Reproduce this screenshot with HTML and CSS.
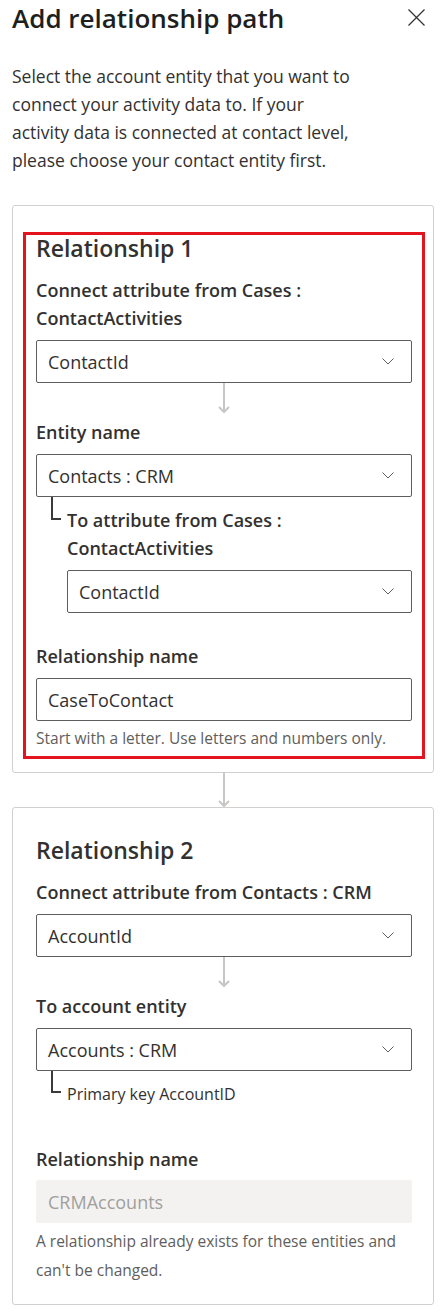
FILE: index.html
```html
<!DOCTYPE html>
<html lang="en">
<head>
<meta charset="utf-8">
<title>Add relationship path</title>
<link rel="stylesheet" href="styles.css">
</head>
<body>
<div class="panel">
  <header class="panel-header">
    <h1 class="panel-title">Add relationship path</h1>
    <button class="close-btn" aria-label="Close">
      <svg width="17" height="17" viewBox="0 0 17 17"><path d="M0.5 0.5 L16.5 16.5 M16.5 0.5 L0.5 16.5" stroke="#323130" stroke-width="1.2" fill="none"/></svg>
    </button>
  </header>
  <p class="intro">Select the account entity that you want to connect your activity data to. If your activity data is connected at contact level, please choose your contact entity first.</p>

  <section class="card">
    <div class="highlight"></div>
    <h2 class="card-title">Relationship 1</h2>
    <div class="field-label">Connect attribute from Cases : ContactActivities</div>
    <div class="dropdown"><span>ContactId</span><svg class="chev" width="12" height="7" viewBox="0 0 12 7"><path d="M0.5 0.5 L6 6 L11.5 0.5" stroke="#605e5c" stroke-width="1" fill="none"/></svg></div>
    <div class="flow-arrow"><svg width="12" height="30" viewBox="0 0 12 30"><path d="M6 0 V28.5 M1 24 L6 29 L11 24" stroke="#c8c6c4" stroke-width="2" fill="none"/></svg></div>
    <div class="field-label">Entity name</div>
    <div class="dropdown"><span>Contacts : CRM</span><svg class="chev" width="12" height="7" viewBox="0 0 12 7"><path d="M0.5 0.5 L6 6 L11.5 0.5" stroke="#605e5c" stroke-width="1" fill="none"/></svg></div>
    <div class="branch">
      <div class="branch-line"></div>
      <div class="branch-body">
        <div class="field-label">To attribute from Cases : ContactActivities</div>
        <div class="dropdown"><span>ContactId</span><svg class="chev" width="12" height="7" viewBox="0 0 12 7"><path d="M0.5 0.5 L6 6 L11.5 0.5" stroke="#605e5c" stroke-width="1" fill="none"/></svg></div>
      </div>
    </div>
    <div class="field-label name-label">Relationship name</div>
    <div class="textbox">CaseToContact</div>
    <p class="hint">Start with a letter. Use letters and numbers only.</p>
  </section>

  <div class="card-arrow"><svg width="12" height="34" viewBox="0 0 12 34"><path d="M6 0 V32.5 M1 28 L6 33 L11 28" stroke="#c8c6c4" stroke-width="2" fill="none"/></svg></div>

  <section class="card">
    <h2 class="card-title">Relationship 2</h2>
    <div class="field-label">Connect attribute from Contacts : CRM</div>
    <div class="dropdown"><span>AccountId</span><svg class="chev" width="12" height="7" viewBox="0 0 12 7"><path d="M0.5 0.5 L6 6 L11.5 0.5" stroke="#605e5c" stroke-width="1" fill="none"/></svg></div>
    <div class="flow-arrow"><svg width="12" height="30" viewBox="0 0 12 30"><path d="M6 0 V28.5 M1 24 L6 29 L11 24" stroke="#c8c6c4" stroke-width="2" fill="none"/></svg></div>
    <div class="field-label">To account entity</div>
    <div class="dropdown"><span>Accounts : CRM</span><svg class="chev" width="12" height="7" viewBox="0 0 12 7"><path d="M0.5 0.5 L6 6 L11.5 0.5" stroke="#605e5c" stroke-width="1" fill="none"/></svg></div>
    <div class="branch">
      <div class="branch-line short"></div>
      <div class="branch-body">
        <div class="key-note">Primary key AccountID</div>
      </div>
    </div>
    <div class="field-label name-label wide">Relationship name</div>
    <div class="textbox disabled">CRMAccounts</div>
    <p class="hint tall">A relationship already exists for these entities and can't be changed.</p>
  </section>
</div>
</body>
</html>
```

FILE: styles.css
```css
* { box-sizing: border-box; }

body {
  margin: 0;
  background: #ffffff;
  font-family: "Open Sans", "Noto Sans", "Liberation Sans", sans-serif;
  color: #323130;
}

.panel {
  padding: 0 11px 8px 12px;
}

.panel-header {
  display: flex;
  justify-content: space-between;
  align-items: flex-start;
}

.panel-title {
  margin: 2px 0 0 0;
  font-size: 26px;
  line-height: 32px;
  font-weight: 600;
  color: #201f1e;
}

.close-btn {
  width: 36px;
  height: 34px;
  border: none;
  background: transparent;
  padding: 0;
  display: flex;
  align-items: center;
  justify-content: center;
  cursor: pointer;
}

.intro {
  margin: 28px 0 0 0;
  max-width: 346px;
  font-size: 17.5px;
  line-height: 28px;
  color: #323130;
}

.card {
  position: relative;
  margin-top: 31px;
  border: 1px solid #d2d0ce;
  border-radius: 3px;
  padding: 28px 21px 20px 23px;
  display: flex;
  flex-direction: column;
}

.highlight {
  position: absolute;
  left: 10px;
  top: 26px;
  right: 8px;
  bottom: 13px;
  border: 3px solid #e3141e;
  pointer-events: none;
}

.card-title {
  margin: 0;
  font-size: 23px;
  line-height: 28px;
  font-weight: 600;
  color: #323130;
}

.field-label {
  margin-top: 14px;
  font-size: 18px;
  line-height: 28px;
  font-weight: 600;
  color: #323130;
}

.flow-arrow + .field-label { margin-top: 0; }
.branch-body > .field-label { margin-top: 0; }
.name-label { margin-top: 29px; }
.name-label.wide { margin-top: 37px; }

.dropdown,
.textbox {
  margin-top: 8px;
  height: 43px;
  border: 1px solid #605e5c;
  border-radius: 2px;
  padding: 0 17px 0 11px;
  display: flex;
  align-items: center;
  justify-content: space-between;
  font-size: 18px;
  color: #323130;
}

.name-label.wide + .textbox { margin-top: 7px; }

.chev { flex: none; }

.textbox.disabled {
  background: #f3f2f1;
  border-color: #f3f2f1;
  color: #a19f9d;
}

.flow-arrow {
  height: 35px;
  display: flex;
  justify-content: center;
  align-items: flex-start;
}

.card-arrow {
  height: 34px;
  display: flex;
  justify-content: center;
  padding-left: 1px;
}

.card-arrow + .card { margin-top: 0; }

.branch {
  display: flex;
  align-items: flex-start;
}

.branch-line {
  flex: none;
  margin-left: 15px;
  width: 10px;
  height: 23px;
  border-left: 2px solid #3b3a39;
  border-bottom: 2px solid #3b3a39;
}

.branch-line.short { height: 22px; }

.branch-body {
  flex: 1;
  padding-top: 9px;
  margin-left: 6px;
  display: flex;
  flex-direction: column;
}

.key-note {
  font-size: 16px;
  line-height: 28px;
  color: #323130;
}

.hint {
  margin: 3px 0 0 0;
  font-size: 15.5px;
  line-height: 28px;
  color: #605e5c;
}

.hint.tall {
  margin-top: 4px;
  line-height: 28.5px;
}
```
